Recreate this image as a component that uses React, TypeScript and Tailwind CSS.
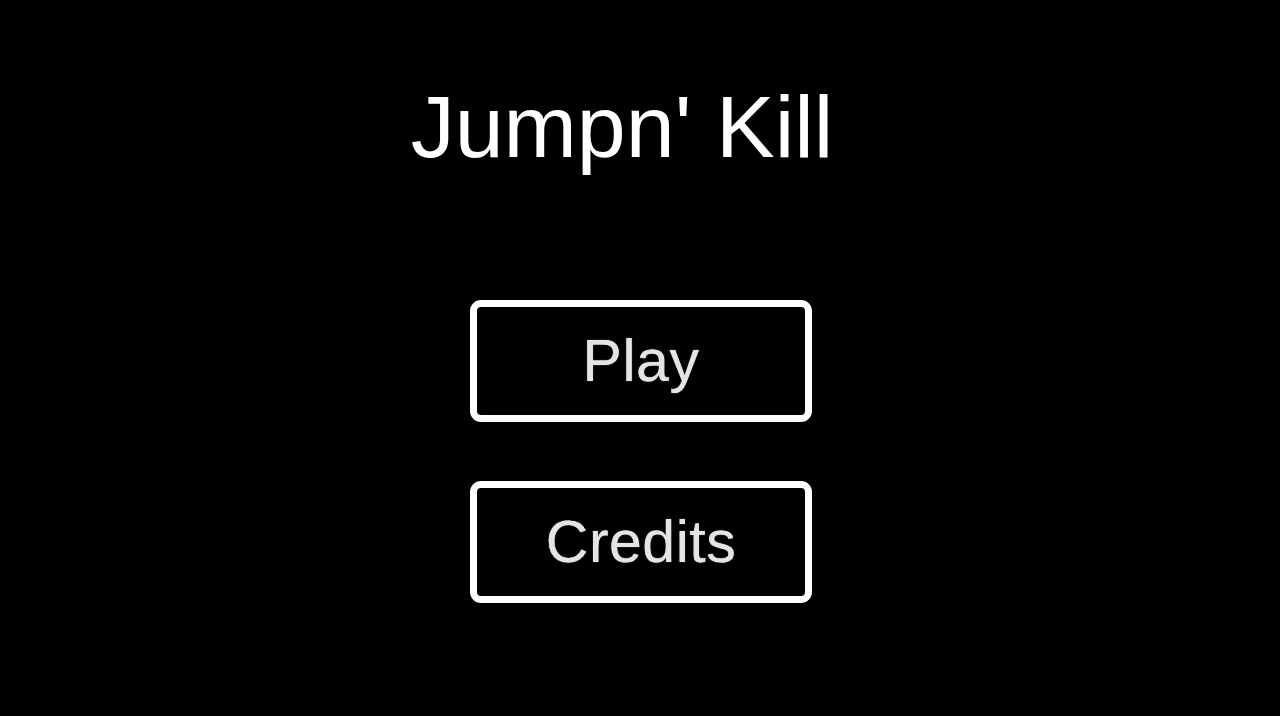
import React from 'react';

const MenuButton: React.FC<{ label: string }> = ({ label }) => (
  <button className="w-[342px] h-[122px] border-[7px] border-white rounded-[11px] bg-black flex items-center justify-center">
    <span className="text-[59px] leading-none tracking-[0.5px] text-[#e4e4e4] blur-[0.6px] [text-shadow:0_0_1px_#e4e4e4] font-['Liberation_Sans',Arial,sans-serif]">
      {label}
    </span>
  </button>
);

const App: React.FC = () => {
  return (
    <div className="w-full h-[716px] bg-black flex flex-col items-center font-['Liberation_Sans',Arial,sans-serif] overflow-hidden">
      <h1 className="mt-[83px] mr-[36px] text-[88px] leading-none text-white">Jumpn' Kill</h1>
      <div className="mt-[129px] ml-[2px] flex flex-col gap-[59px]">
        <MenuButton label="Play" />
        <MenuButton label="Credits" />
      </div>
    </div>
  );
};

export default App;
